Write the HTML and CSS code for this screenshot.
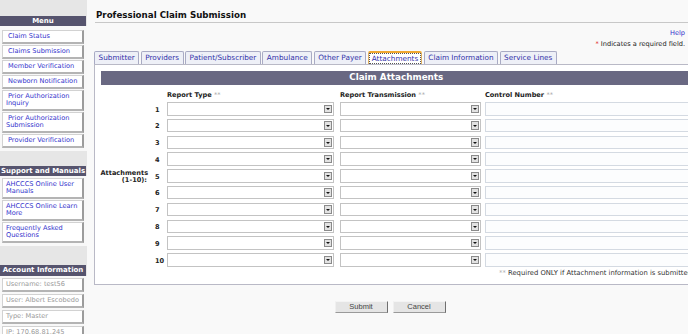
FILE: index.html
```html
<!DOCTYPE html>
<html>
<head>
<meta charset="utf-8">
<link rel="stylesheet" href="styles.css">
</head>
<body>
<aside class="sidebar">
  <div class="side-head head-menu">Menu</div>
  <div class="side-list list-menu">
    <a class="side-item ind">Claim Status</a>
    <a class="side-item ind">Claims Submission</a>
    <a class="side-item ind">Member Verification</a>
    <a class="side-item ind">Newborn Notification</a>
    <a class="side-item ind">Prior Authorization Inquiry</a>
    <a class="side-item ind">Prior Authorization Submission</a>
    <a class="side-item ind">Provider Verification</a>
  </div>
  <div class="side-head head-support">Support and Manuals</div>
  <div class="side-list list-support">
    <a class="side-item">AHCCCS Online User Manuals</a>
    <a class="side-item">AHCCCS Online Learn More</a>
    <a class="side-item">Frequently Asked Questions</a>
  </div>
  <div class="side-head head-account">Account Information</div>
  <div class="side-list list-account">
    <div class="side-item info">Username: test56</div>
    <div class="side-item info">User: Albert Escobedo</div>
    <div class="side-item info">Type: Master</div>
    <div class="side-item info">IP: 170.68.81.245</div>
  </div>
</aside>
<main class="main">
  <h1 class="title">Professional Claim Submission</h1>
  <div class="rule"></div>
  <div class="help"><a>Help</a></div>
  <div class="required"><span class="star">*</span> Indicates a required field.</div>
  <nav class="tabs">
    <a class="tab">Submitter</a>
    <a class="tab">Providers</a>
    <a class="tab">Patient/Subscriber</a>
    <a class="tab">Ambulance</a>
    <a class="tab">Other Payer</a>
    <a class="tab active"><span>Attachments</span></a>
    <a class="tab">Claim Information</a>
    <a class="tab">Service Lines</a>
  </nav>
  <section class="panel">
    <div class="bar">Claim Attachments</div>
    <div class="grid">
      <div class="att-label">Attachments<br>(1-10):</div>
      <div class="colhead c-num"></div>
      <div class="colhead">Report Type <span class="dd">**</span></div>
      <div class="colhead">Report Transmission <span class="dd">**</span></div>
      <div class="colhead">Control Number <span class="dd">**</span></div>

      <div class="num">1</div><div class="cell"><div class="sel w1"><span class="arr"></span></div></div><div class="cell"><div class="sel w2"><span class="arr"></span></div></div><div class="cell"><div class="inp"></div></div>
      <div class="num">2</div><div class="cell"><div class="sel w1"><span class="arr"></span></div></div><div class="cell"><div class="sel w2"><span class="arr"></span></div></div><div class="cell"><div class="inp"></div></div>
      <div class="num">3</div><div class="cell"><div class="sel w1"><span class="arr"></span></div></div><div class="cell"><div class="sel w2"><span class="arr"></span></div></div><div class="cell"><div class="inp"></div></div>
      <div class="num">4</div><div class="cell"><div class="sel w1"><span class="arr"></span></div></div><div class="cell"><div class="sel w2"><span class="arr"></span></div></div><div class="cell"><div class="inp"></div></div>
      <div class="num">5</div><div class="cell"><div class="sel w1"><span class="arr"></span></div></div><div class="cell"><div class="sel w2"><span class="arr"></span></div></div><div class="cell"><div class="inp"></div></div>
      <div class="num">6</div><div class="cell"><div class="sel w1"><span class="arr"></span></div></div><div class="cell"><div class="sel w2"><span class="arr"></span></div></div><div class="cell"><div class="inp"></div></div>
      <div class="num">7</div><div class="cell"><div class="sel w1"><span class="arr"></span></div></div><div class="cell"><div class="sel w2"><span class="arr"></span></div></div><div class="cell"><div class="inp"></div></div>
      <div class="num">8</div><div class="cell"><div class="sel w1"><span class="arr"></span></div></div><div class="cell"><div class="sel w2"><span class="arr"></span></div></div><div class="cell"><div class="inp"></div></div>
      <div class="num">9</div><div class="cell"><div class="sel w1"><span class="arr"></span></div></div><div class="cell"><div class="sel w2"><span class="arr"></span></div></div><div class="cell"><div class="inp"></div></div>
      <div class="num">10</div><div class="cell"><div class="sel w1"><span class="arr"></span></div></div><div class="cell"><div class="sel w2"><span class="arr"></span></div></div><div class="cell"><div class="inp"></div></div>
    </div>
    <div class="note"><span class="dd">**</span> Required ONLY if Attachment information is submitted</div>
  </section>
  <div class="buttons">
    <button class="btn">Submit</button>
    <button class="btn">Cancel</button>
  </div>
</main>
</body>
</html>
```
FILE: styles.css
```css
* { box-sizing: border-box; }
html, body { margin: 0; padding: 0; height: 334px; overflow: hidden; }
body {
  display: flex;
  width: 688px;
  font-family: "DejaVu Sans", Verdana, sans-serif;
  font-size: 6.6px;
  color: #222;
  background: #f9f9f9;
}
a { color: #3333cc; text-decoration: none; }

/* sidebar */
.sidebar {
  width: 87px;
  flex: none;
  background: #e6e6e6;
  display: flex;
  flex-direction: column;
}
.side-head {
  height: 10.5px;
  line-height: 10.5px;
  background: #56546e;
  color: #fff;
  font-weight: bold;
  font-size: 7px;
  text-align: center;
  margin-right: 1px;
}
.head-menu { margin-top: 15.5px; }
.head-support { margin-top: 15px; }
.head-account { margin-top: 19px; }
.side-list {
  background: #f8f8f8;
  display: flex;
  flex-direction: column;
  gap: 1px;
  padding: 3.7px 3px 3px 2px;
}
.list-support { padding-top: 2px; }
.list-account { padding-top: 2px; gap: 2px; }
.side-item {
  display: block;
  background: #fff;
  border: 1px solid #d2d2d2;
  border-right: 2px solid #9c9c9c;
  border-bottom: 2px solid #b4b4b4;
  padding: 2px 3px;
  line-height: 7px;
  color: #3333cc;
}
.side-item.ind { text-indent: 2px; }
.side-item.info { color: #999; }

/* main */
.main {
  flex: 1;
  min-width: 0;
  padding-left: 7px;
}
.title {
  margin: 11px 0 0 2px;
  font-size: 8.7px;
  line-height: 8px;
  font-weight: bold;
  color: #111;
}
.rule {
  height: 1px;
  background: #c8c8c8;
  margin: 2.5px 0 0 1px;
}
.help {
  text-align: right;
  padding-right: 3px;
  margin-top: 7.5px;
  line-height: 6px;
}
.required {
  text-align: right;
  padding-right: 3px;
  margin-top: 4.5px;
  line-height: 6px;
}
.star { color: #e03030; }

.tabs {
  display: flex;
  gap: 1.5px;
  margin-top: 4.5px;
  height: 13px;
}
.tab {
  display: block;
  height: 13px;
  border: 1px solid #a9abc4;
  border-bottom: none;
  border-radius: 2px 2px 0 0;
  background: #eef0f7;
  padding: 0 3.5px;
  line-height: 12px;
  font-size: 7.3px;
  color: #3333aa;
}
.tab.active {
  background: #fff;
  border-color: #e0b060;
  border-top: 2px solid #f0a830;
  line-height: 11px;
  padding: 0 1.5px;
}
.tab.active span {
  outline: 1px dotted #555;
  padding: 0 1.5px;
}

.panel {
  width: 604px;
  height: 221px;
  background: #fff;
  border: 1px solid #b9b9c6;
  padding: 6px 5px 0 5.5px;
}
.bar {
  height: 13.5px;
  line-height: 13.5px;
  background: #696882;
  color: #fff;
  font-weight: bold;
  font-size: 8.8px;
  text-align: center;
}
.grid {
  display: grid;
  grid-template-columns: 54.5px 12px 173px 145px 1fr;
  grid-template-rows: 17.5px repeat(10, 16.8px);
}
.att-label {
  grid-row: 1 / span 11;
  grid-column: 1;
  align-self: center;
  text-align: right;
  padding-right: 8px;
  font-weight: bold;
  line-height: 7px;
  color: #222;
}
.colhead {
  padding-top: 6px;
  font-weight: bold;
  color: #222;
}
.dd { color: #aaa; font-weight: normal; }
.num {
  font-weight: bold;
  padding-top: 3.5px;
  color: #222;
}
.sel {
  position: relative;
  height: 13.5px;
  border: 1px solid #c3c3c3;
  background: #fff;
}
.sel.w1 { width: 167px; }
.sel.w2 { width: 141px; }
.arr {
  position: absolute;
  right: 1.5px;
  top: 1.5px;
  width: 8px;
  height: 8.5px;
  border: 1px solid #8a8a8a;
  background: #e2e2e2;
}
.arr::after {
  content: "";
  position: absolute;
  left: 1.5px;
  top: 2.5px;
  border-left: 2.5px solid transparent;
  border-right: 2.5px solid transparent;
  border-top: 2.5px solid #111;
}
.inp {
  height: 13.5px;
  border: 1px solid #d4dae2;
  background: #fcfdfe;
}
.note {
  text-align: right;
  margin-top: 0;
  line-height: 6px;
  font-size: 6.8px;
  color: #333;
}

.buttons {
  display: flex;
  justify-content: center;
  gap: 5px;
  margin-top: 15.5px;
  padding-right: 2px;
}
.btn {
  width: 53px;
  height: 12.5px;
  padding: 0;
  background: #e5e5e5;
  border: 1px solid;
  border-color: #f4f4f4 #6f6f6f #9a9a9a #f0f0f0;
  font-family: "Liberation Sans", Arial, sans-serif;
  font-size: 7.5px;
  color: #444;
}
```
